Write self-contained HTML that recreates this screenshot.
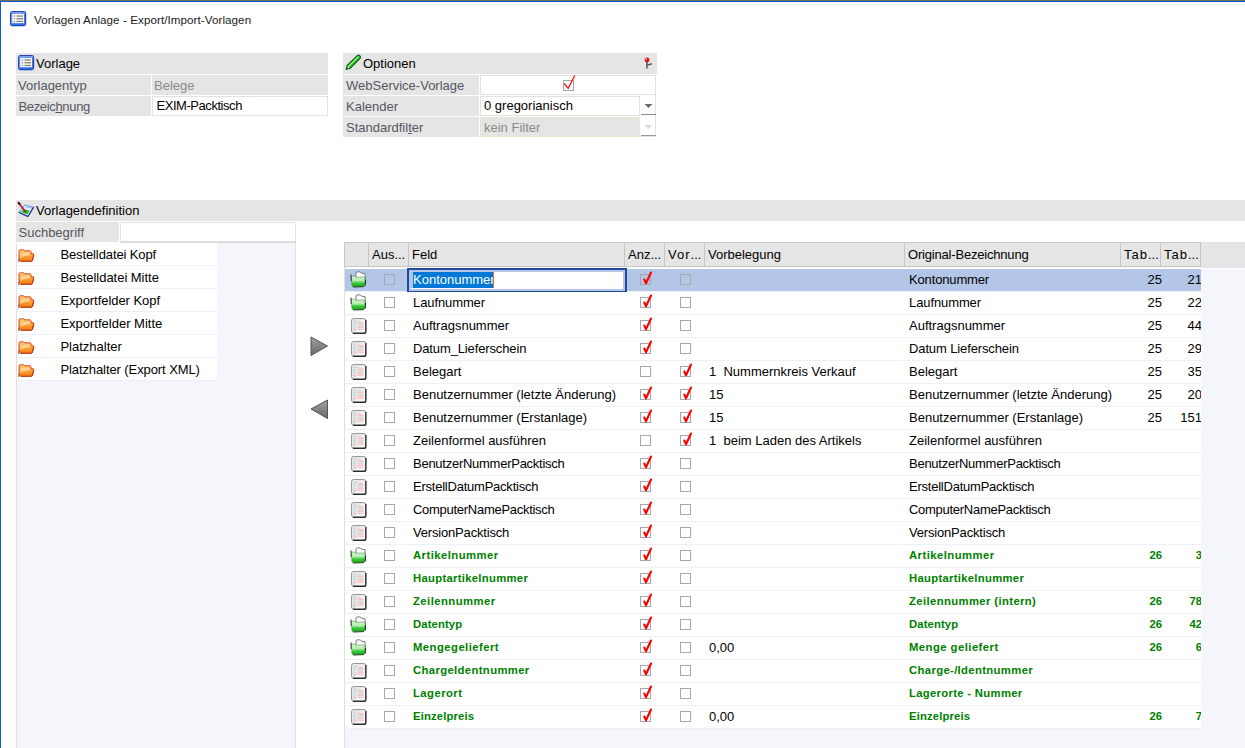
<!DOCTYPE html><html><head><meta charset="utf-8"><style>
html,body{margin:0;padding:0;}
body{width:1245px;height:748px;overflow:hidden;position:relative;background:#fff;font-family:"Liberation Sans",sans-serif;}
div{position:absolute;}
.t{white-space:nowrap;line-height:20px;height:20px;}
</style></head><body>
<div style="left:0px;top:0px;width:1245px;height:1px;background:#746a5e"></div>
<div style="left:0px;top:1px;width:1245px;height:1px;background:#0b5ccf"></div>
<div style="left:0px;top:1px;width:1px;height:747px;background:#0b5ccf"></div>
<svg style="position:absolute;left:10px;top:11px" width="17" height="16" viewBox="0 0 17 16">
<rect x="0.6" y="0.6" width="15" height="14" rx="1.8" fill="#fefefe" stroke="#2546b8" stroke-width="1.2"/>
<rect x="1.2" y="1.2" width="13.8" height="1.8" fill="#6d98ee"/>
<rect x="1.2" y="12.2" width="13.8" height="1.8" fill="#2f6ff2"/>
<rect x="1.2" y="3" width="1" height="9.2" fill="#4d7be0"/><rect x="14" y="3" width="1" height="9.2" fill="#4d7be0"/>
<rect x="3.6" y="4.4" width="1.6" height="1.3" fill="#8c8c8c"/><rect x="6.4" y="4.4" width="6.6" height="1.3" fill="#7f7f7f"/>
<rect x="3.6" y="7.1" width="1.6" height="1.3" fill="#8c8c8c"/><rect x="6.4" y="7.1" width="6.6" height="1.3" fill="#7f7f7f"/>
<rect x="3.6" y="9.8" width="1.6" height="1.3" fill="#8c8c8c"/><rect x="6.4" y="9.8" width="6.6" height="1.3" fill="#7f7f7f"/>
</svg>
<div class="t" style="left:34px;top:9.98px;font-size:11.6px;color:#1a1a1a;letter-spacing:0.08px;">Vorlagen Anlage - Export/Import-Vorlagen</div>
<div style="left:16px;top:53px;width:312px;height:21px;background:#e5e5e5"></div>
<svg style="position:absolute;left:18px;top:55px" width="17" height="16" viewBox="0 0 17 16">
<rect x="0.6" y="0.6" width="15" height="14" rx="1.8" fill="#fefefe" stroke="#2546b8" stroke-width="1.2"/>
<rect x="1.2" y="1.2" width="13.8" height="1.8" fill="#6d98ee"/>
<rect x="1.2" y="12.2" width="13.8" height="1.8" fill="#2f6ff2"/>
<rect x="1.2" y="3" width="1" height="9.2" fill="#4d7be0"/><rect x="14" y="3" width="1" height="9.2" fill="#4d7be0"/>
<rect x="3.6" y="4.4" width="1.6" height="1.3" fill="#8c8c8c"/><rect x="6.4" y="4.4" width="6.6" height="1.3" fill="#7f7f7f"/>
<rect x="3.6" y="7.1" width="1.6" height="1.3" fill="#8c8c8c"/><rect x="6.4" y="7.1" width="6.6" height="1.3" fill="#7f7f7f"/>
<rect x="3.6" y="9.8" width="1.6" height="1.3" fill="#8c8c8c"/><rect x="6.4" y="9.8" width="6.6" height="1.3" fill="#7f7f7f"/>
</svg>
<div class="t" style="left:36px;top:53.50px;font-size:13px;color:#000;">Vorlage</div>
<div style="left:16px;top:75px;width:135px;height:20px;background:#e5e5e5"></div>
<div style="left:152px;top:75px;width:176px;height:20px;background:#e5e5e5"></div>
<div class="t" style="left:154px;top:75.50px;font-size:13px;color:#8a8a8a;">Belege</div>
<div style="left:16px;top:96px;width:135px;height:20px;background:#e5e5e5"></div>
<div style="left:152px;top:96px;width:176px;height:20px;background:#fff;border:1px solid #e2e2e2;box-sizing:border-box"></div>
<div class="t" style="left:156.5px;top:95.50px;font-size:13px;color:#000;letter-spacing:-0.45px;">EXIM-Packtisch</div>
<div class="t" style="left:18px;top:75.50px;font-size:13px;color:#565662;">Vorlagentyp</div>
<div class="t" style="left:18.4px;top:96.50px;font-size:13px;color:#565662;letter-spacing:-0.33px;">Bezeic<u>h</u>nung</div>
<div style="left:343px;top:53px;width:314px;height:21px;background:#e5e5e5"></div>
<svg style="position:absolute;left:345px;top:54px" width="17" height="17" viewBox="0 0 17 17">
<path d="M1.2 15.3 L2.3 11.3 L12.3 1.6 Q13.7 0.6 14.9 1.8 Q16 3 15 4.3 L5.2 14.2 Z" fill="#2fc12f" stroke="#0a5a0a" stroke-width="1.1"/>
<path d="M3.3 12.6 L13.6 2.6" stroke="#b8f7a8" stroke-width="1.1"/>
<path d="M1.2 15.3 L1.9 12.6 L3.9 14.6 Z" fill="#0a4a0a"/>
<circle cx="3.2" cy="13.3" r="0.9" fill="#f0fff0"/>
</svg>
<div class="t" style="left:363px;top:53.50px;font-size:13px;color:#000;">Optionen</div>
<svg style="position:absolute;left:644px;top:57px" width="9" height="13" viewBox="0 0 9 13">
<path d="M3 5 L2.8 11.5" stroke="#5f6673" stroke-width="1.7"/>
<path d="M3 8.2 L7.8 6.8" stroke="#555b66" stroke-width="1.6"/>
<circle cx="3" cy="3" r="2.45" fill="#e3101a"/>
<circle cx="2.2" cy="2.1" r="0.9" fill="#ffa8a8"/>
</svg>
<div style="left:343px;top:74px;width:1px;height:63px;background:#e5e5e5"></div>
<div style="left:343px;top:75px;width:136px;height:20px;background:#e5e5e5"></div>
<div class="t" style="left:346px;top:75.50px;font-size:13px;color:#565662;">WebService-Vorlage</div>
<div style="left:343px;top:96px;width:136px;height:20px;background:#e5e5e5"></div>
<div class="t" style="left:346px;top:96.50px;font-size:13px;color:#565662;">Kalender</div>
<div style="left:343px;top:117px;width:136px;height:20px;background:#e5e5e5"></div>
<div class="t" style="left:346px;top:117.50px;font-size:13px;color:#565662;">Standardfil<u>t</u>er</div>
<div style="left:480px;top:75px;width:176px;height:20px;background:#fff;border:1px solid #e2e2e2;box-sizing:border-box"></div>
<div style="left:563px;top:80px;width:11px;height:11px;border:1px solid #a8a8a8;box-sizing:border-box;"></div>
<svg style="position:absolute;left:563px;top:75px" width="13" height="16" viewBox="0 0 13 16"><path d="M1.3 8.5 L5.2 13.3 L11.8 0.5" stroke="#ff1010" stroke-width="1.3" fill="none"/></svg>
<div style="left:480px;top:95px;width:176px;height:22px;background:#fff;border-right:1px solid #e2e2e2;box-sizing:border-box"></div>
<div style="left:480px;top:96px;width:160px;height:20px;background:#fff;border:1px solid #e2e2e2;box-sizing:border-box"></div>
<div class="t" style="left:484px;top:95.50px;font-size:13px;color:#000;">0 gregorianisch</div>
<svg style="position:absolute;left:644px;top:104px" width="9" height="5" viewBox="0 0 9 5"><path d="M0.5 0 L8.5 0 L4.5 4 Z" fill="#6a6a6a"/></svg>
<div style="left:641px;top:114px;width:15px;height:1px;background:#8a8a8a"></div>
<div style="left:480px;top:116px;width:176px;height:21px;background:#fff;border-right:1px solid #e2e2e2;border-bottom:1px solid #e2e2e2;box-sizing:border-box"></div>
<div style="left:480px;top:117px;width:160px;height:20px;background:#e5e5e5;border:1px solid #ece5d0;box-sizing:border-box"></div>
<div class="t" style="left:484px;top:117.50px;font-size:13px;color:#8a8a8a;">kein Filter</div>
<svg style="position:absolute;left:644px;top:125px" width="9" height="5" viewBox="0 0 9 5"><path d="M0.5 0 L8.5 0 L4.5 4 Z" fill="#dcdcdc"/></svg>
<div style="left:641px;top:135px;width:15px;height:1px;background:#9a9a9a"></div>
<div style="left:16px;top:200px;width:1229px;height:21px;background:#e5e5e5"></div>
<svg style="position:absolute;left:17px;top:201px" width="18" height="17" viewBox="0 0 18 17">
<path d="M2 11.4 L7.9 4 L16.7 6.1 L10.8 15.5 Z" fill="#eef3ff" stroke="#7d9de6" stroke-width="1.1"/>
<path d="M16.7 6.1 L10.8 15.5 L2 11.4" fill="none" stroke="#1f3f8f" stroke-width="1.3"/>
<path d="M8.6 5.8 L14.8 7.2" stroke="#9fb8f0" stroke-width="1.3"/>
<path d="M4 11 L6.6 8 L12.6 9.6 L10.2 13.6 Z" fill="#1fc21f"/>
<path d="M1.2 1.2 L8.8 11.2" stroke="#b51c1c" stroke-width="1.6"/>
<path d="M1.2 1.2 L3 3.6" stroke="#3a0606" stroke-width="1.8"/>
</svg>
<div class="t" style="left:36px;top:200.50px;font-size:13px;color:#000;">Vorlagendefinition</div>
<div style="left:16px;top:222px;width:103px;height:20px;background:#e5e5e5"></div>
<div class="t" style="left:18.5px;top:222.50px;font-size:13px;color:#565662;">Suchbegriff</div>
<div style="left:120px;top:222px;width:176px;height:21px;background:#fff;border:1px solid #e2e2e2;border-bottom:2px solid #dcdcdc;box-sizing:border-box"></div>
<div style="left:16px;top:243px;width:280px;height:505px;background:#f4f6fb;border-left:1px solid #e0e0e0;border-right:1px solid #e0e0e0;box-sizing:border-box"></div>
<div style="left:17px;top:243px;width:200px;height:23px;background:#fff;border-bottom:1px solid #eef0f7;box-sizing:border-box"></div>
<svg style="position:absolute;left:18px;top:249px" width="17" height="14" viewBox="0 0 17 14">
<defs><linearGradient id="of" x1="0" y1="0" x2="0" y2="1"><stop offset="0" stop-color="#ffd08a"/><stop offset="0.45" stop-color="#ffa43a"/><stop offset="1" stop-color="#f27a12"/></linearGradient></defs>
<path d="M1 2 Q1 0.8 2.2 0.8 L5.5 0.8 L6.8 1.8 L12 1.8 Q13 1.8 13 3 L13 4.5 L15.3 4.8 Q16 5 15.8 6 L14.6 11.2 Q14.3 12.2 13.2 12.2 L2.3 12.2 Q1.2 12.2 1.1 11 Z" fill="url(#of)" stroke="#dc4a22" stroke-width="1"/>
<path d="M2.2 4.5 Q7 3.6 12 3.6 L12 6.2 Q6 6.8 2.4 9 Z" fill="#fff0d0" opacity="0.55"/>
<path d="M0.6 13.3 L0.7 9.5" stroke="#666" stroke-width="0.8"/><path d="M15.6 5.5 L14.4 11.4 Q14 12.3 12.8 12.3 L3 12.4" stroke="#a02a10" stroke-width="0.9" fill="none" opacity="0.8"/>
</svg>
<div class="t" style="left:60.4px;top:244.50px;font-size:13px;color:#000;letter-spacing:-0.11px;">Bestelldatei Kopf</div>
<div style="left:17px;top:266px;width:200px;height:23px;background:#fff;border-bottom:1px solid #eef0f7;box-sizing:border-box"></div>
<svg style="position:absolute;left:18px;top:272px" width="17" height="14" viewBox="0 0 17 14">
<defs><linearGradient id="of" x1="0" y1="0" x2="0" y2="1"><stop offset="0" stop-color="#ffd08a"/><stop offset="0.45" stop-color="#ffa43a"/><stop offset="1" stop-color="#f27a12"/></linearGradient></defs>
<path d="M1 2 Q1 0.8 2.2 0.8 L5.5 0.8 L6.8 1.8 L12 1.8 Q13 1.8 13 3 L13 4.5 L15.3 4.8 Q16 5 15.8 6 L14.6 11.2 Q14.3 12.2 13.2 12.2 L2.3 12.2 Q1.2 12.2 1.1 11 Z" fill="url(#of)" stroke="#dc4a22" stroke-width="1"/>
<path d="M2.2 4.5 Q7 3.6 12 3.6 L12 6.2 Q6 6.8 2.4 9 Z" fill="#fff0d0" opacity="0.55"/>
<path d="M0.6 13.3 L0.7 9.5" stroke="#666" stroke-width="0.8"/><path d="M15.6 5.5 L14.4 11.4 Q14 12.3 12.8 12.3 L3 12.4" stroke="#a02a10" stroke-width="0.9" fill="none" opacity="0.8"/>
</svg>
<div class="t" style="left:60.4px;top:267.50px;font-size:13px;color:#000;letter-spacing:-0.03px;">Bestelldatei Mitte</div>
<div style="left:17px;top:289px;width:200px;height:23px;background:#fff;border-bottom:1px solid #eef0f7;box-sizing:border-box"></div>
<svg style="position:absolute;left:18px;top:295px" width="17" height="14" viewBox="0 0 17 14">
<defs><linearGradient id="of" x1="0" y1="0" x2="0" y2="1"><stop offset="0" stop-color="#ffd08a"/><stop offset="0.45" stop-color="#ffa43a"/><stop offset="1" stop-color="#f27a12"/></linearGradient></defs>
<path d="M1 2 Q1 0.8 2.2 0.8 L5.5 0.8 L6.8 1.8 L12 1.8 Q13 1.8 13 3 L13 4.5 L15.3 4.8 Q16 5 15.8 6 L14.6 11.2 Q14.3 12.2 13.2 12.2 L2.3 12.2 Q1.2 12.2 1.1 11 Z" fill="url(#of)" stroke="#dc4a22" stroke-width="1"/>
<path d="M2.2 4.5 Q7 3.6 12 3.6 L12 6.2 Q6 6.8 2.4 9 Z" fill="#fff0d0" opacity="0.55"/>
<path d="M0.6 13.3 L0.7 9.5" stroke="#666" stroke-width="0.8"/><path d="M15.6 5.5 L14.4 11.4 Q14 12.3 12.8 12.3 L3 12.4" stroke="#a02a10" stroke-width="0.9" fill="none" opacity="0.8"/>
</svg>
<div class="t" style="left:60.4px;top:290.50px;font-size:13px;color:#000;letter-spacing:-0.05px;">Exportfelder Kopf</div>
<div style="left:17px;top:312px;width:200px;height:23px;background:#fff;border-bottom:1px solid #eef0f7;box-sizing:border-box"></div>
<svg style="position:absolute;left:18px;top:318px" width="17" height="14" viewBox="0 0 17 14">
<defs><linearGradient id="of" x1="0" y1="0" x2="0" y2="1"><stop offset="0" stop-color="#ffd08a"/><stop offset="0.45" stop-color="#ffa43a"/><stop offset="1" stop-color="#f27a12"/></linearGradient></defs>
<path d="M1 2 Q1 0.8 2.2 0.8 L5.5 0.8 L6.8 1.8 L12 1.8 Q13 1.8 13 3 L13 4.5 L15.3 4.8 Q16 5 15.8 6 L14.6 11.2 Q14.3 12.2 13.2 12.2 L2.3 12.2 Q1.2 12.2 1.1 11 Z" fill="url(#of)" stroke="#dc4a22" stroke-width="1"/>
<path d="M2.2 4.5 Q7 3.6 12 3.6 L12 6.2 Q6 6.8 2.4 9 Z" fill="#fff0d0" opacity="0.55"/>
<path d="M0.6 13.3 L0.7 9.5" stroke="#666" stroke-width="0.8"/><path d="M15.6 5.5 L14.4 11.4 Q14 12.3 12.8 12.3 L3 12.4" stroke="#a02a10" stroke-width="0.9" fill="none" opacity="0.8"/>
</svg>
<div class="t" style="left:60.4px;top:313.50px;font-size:13px;color:#000;letter-spacing:0px;">Exportfelder Mitte</div>
<div style="left:17px;top:335px;width:200px;height:23px;background:#fff;border-bottom:1px solid #eef0f7;box-sizing:border-box"></div>
<svg style="position:absolute;left:18px;top:341px" width="17" height="14" viewBox="0 0 17 14">
<defs><linearGradient id="of" x1="0" y1="0" x2="0" y2="1"><stop offset="0" stop-color="#ffd08a"/><stop offset="0.45" stop-color="#ffa43a"/><stop offset="1" stop-color="#f27a12"/></linearGradient></defs>
<path d="M1 2 Q1 0.8 2.2 0.8 L5.5 0.8 L6.8 1.8 L12 1.8 Q13 1.8 13 3 L13 4.5 L15.3 4.8 Q16 5 15.8 6 L14.6 11.2 Q14.3 12.2 13.2 12.2 L2.3 12.2 Q1.2 12.2 1.1 11 Z" fill="url(#of)" stroke="#dc4a22" stroke-width="1"/>
<path d="M2.2 4.5 Q7 3.6 12 3.6 L12 6.2 Q6 6.8 2.4 9 Z" fill="#fff0d0" opacity="0.55"/>
<path d="M0.6 13.3 L0.7 9.5" stroke="#666" stroke-width="0.8"/><path d="M15.6 5.5 L14.4 11.4 Q14 12.3 12.8 12.3 L3 12.4" stroke="#a02a10" stroke-width="0.9" fill="none" opacity="0.8"/>
</svg>
<div class="t" style="left:60.4px;top:336.50px;font-size:13px;color:#000;letter-spacing:0px;">Platzhalter</div>
<div style="left:17px;top:358px;width:200px;height:23px;background:#fff;border-bottom:1px solid #eef0f7;box-sizing:border-box"></div>
<svg style="position:absolute;left:18px;top:364px" width="17" height="14" viewBox="0 0 17 14">
<defs><linearGradient id="of" x1="0" y1="0" x2="0" y2="1"><stop offset="0" stop-color="#ffd08a"/><stop offset="0.45" stop-color="#ffa43a"/><stop offset="1" stop-color="#f27a12"/></linearGradient></defs>
<path d="M1 2 Q1 0.8 2.2 0.8 L5.5 0.8 L6.8 1.8 L12 1.8 Q13 1.8 13 3 L13 4.5 L15.3 4.8 Q16 5 15.8 6 L14.6 11.2 Q14.3 12.2 13.2 12.2 L2.3 12.2 Q1.2 12.2 1.1 11 Z" fill="url(#of)" stroke="#dc4a22" stroke-width="1"/>
<path d="M2.2 4.5 Q7 3.6 12 3.6 L12 6.2 Q6 6.8 2.4 9 Z" fill="#fff0d0" opacity="0.55"/>
<path d="M0.6 13.3 L0.7 9.5" stroke="#666" stroke-width="0.8"/><path d="M15.6 5.5 L14.4 11.4 Q14 12.3 12.8 12.3 L3 12.4" stroke="#a02a10" stroke-width="0.9" fill="none" opacity="0.8"/>
</svg>
<div class="t" style="left:60.4px;top:359.50px;font-size:13px;color:#000;letter-spacing:-0.09px;">Platzhalter (Export XML)</div>
<svg style="position:absolute;left:310px;top:336px" width="19" height="21" viewBox="0 0 19 21"><defs><linearGradient id="g310336" x1="0" y1="0" x2="0" y2="1"><stop offset="0" stop-color="#a0a0a0"/><stop offset="1" stop-color="#6a6a6a"/></linearGradient></defs>
<path d="M1 1 L17.5 10 L1 19.5 Z" fill="url(#g310336)" stroke="#555" stroke-width="1" stroke-linejoin="round"/></svg>
<svg style="position:absolute;left:310px;top:399px" width="19" height="21" viewBox="0 0 19 21"><defs><linearGradient id="g310399" x1="0" y1="0" x2="0" y2="1"><stop offset="0" stop-color="#a0a0a0"/><stop offset="1" stop-color="#6a6a6a"/></linearGradient></defs>
<path d="M17.5 1 L1 10 L17.5 19.5 Z" fill="url(#g310399)" stroke="#555" stroke-width="1" stroke-linejoin="round"/></svg>
<div style="left:344px;top:242px;width:901px;height:506px;background:#f4f6fb"></div>
<div style="left:344px;top:242px;width:1px;height:506px;background:#e0e0e0"></div>
<div style="left:345px;top:267px;width:900px;height:2px;background:#fff"></div>
<div style="left:1201px;top:242px;width:44px;height:26px;background:#e5e5e5"></div>
<div style="left:344px;top:242px;width:857px;height:25px;background:#e5e5e5;border:1px solid #c6c6c6;box-sizing:border-box"></div>
<div style="left:368px;top:242px;width:1px;height:25px;background:#c6c6c6"></div>
<div style="left:408px;top:242px;width:1px;height:25px;background:#c6c6c6"></div>
<div style="left:624px;top:242px;width:1px;height:25px;background:#c6c6c6"></div>
<div style="left:664px;top:242px;width:1px;height:25px;background:#c6c6c6"></div>
<div style="left:704px;top:242px;width:1px;height:25px;background:#c6c6c6"></div>
<div style="left:904px;top:242px;width:1px;height:25px;background:#c6c6c6"></div>
<div style="left:1120px;top:242px;width:1px;height:25px;background:#c6c6c6"></div>
<div style="left:1160px;top:242px;width:1px;height:25px;background:#c6c6c6"></div>
<div class="t" style="left:372px;top:244.50px;font-size:13px;color:#000;letter-spacing:0px;">Aus...</div>
<div class="t" style="left:412px;top:244.50px;font-size:13px;color:#000;letter-spacing:0px;">Feld</div>
<div class="t" style="left:628px;top:244.50px;font-size:13px;color:#000;letter-spacing:0px;">Anz...</div>
<div class="t" style="left:668px;top:244.50px;font-size:13px;color:#000;letter-spacing:0px;"><span style="letter-spacing:1px">Vor</span>...</div>
<div class="t" style="left:708px;top:244.50px;font-size:13px;color:#000;letter-spacing:0px;">Vorbelegung</div>
<div class="t" style="left:908px;top:244.50px;font-size:13px;color:#000;letter-spacing:-0.19px;">Original-Bezeichnung</div>
<div class="t" style="left:1124px;top:244.50px;font-size:13px;color:#000;letter-spacing:0px;"><span style="letter-spacing:1px">Tab</span>...</div>
<div class="t" style="left:1164px;top:244.50px;font-size:13px;color:#000;letter-spacing:0px;"><span style="letter-spacing:1px">Tab</span>...</div>
<div style="left:345px;top:269px;width:856px;height:23px;background:#b3c6e7"></div>
<div style="left:345px;top:291px;width:856px;height:1px;background:#eef0f7"></div>
<svg style="position:absolute;left:350px;top:271px" width="17" height="17" viewBox="0 0 17 17">
<defs><linearGradient id="gf" x1="0" y1="0" x2="0" y2="1"><stop offset="0" stop-color="#dcf6d4"/><stop offset="0.45" stop-color="#b2ecaa"/><stop offset="0.62" stop-color="#3fd03f"/><stop offset="1" stop-color="#16a316"/></linearGradient></defs>
<path d="M6 2 Q6.2 0.9 7.3 0.9 L10 0.9 L11.6 2.2 L15 2.6 L15.6 10 L6 10 Z" fill="#fafafa" stroke="#6f6f6f" stroke-width="0.9"/>
<path d="M1.3 5.2 L4.6 5 L5.6 6.2 L14.6 6 L15.2 13.2 Q15 15.5 13 15.5 L3.6 15.8 Q1.9 15.8 1.8 14 Z" fill="url(#gf)" stroke="#3f8a3f" stroke-width="0.5"/>
<path d="M1 3.5 L1.2 10" stroke="#333" stroke-width="1"/>
<path d="M15.6 9 L15.2 14.6" stroke="#1f2f1f" stroke-width="1"/>
<path d="M3.2 16 L14 15.6" stroke="#2a3a2a" stroke-width="0.9"/>
</svg>
<div style="left:384px;top:274px;width:11px;height:11px;border:1px solid #9fa9b8;box-sizing:border-box;background:transparent;"></div>
<div style="left:640px;top:274px;width:11px;height:11px;border:1px solid #a8a8a8;box-sizing:border-box;"></div>
<svg style="position:absolute;left:640px;top:271px" width="13" height="15" viewBox="0 0 13 15"><path d="M4.3 8.5 L6 12.3 L11 1.5" stroke="#ff0000" stroke-width="2.1" fill="none" stroke-linecap="round" stroke-linejoin="round"/></svg>
<div style="left:680px;top:274px;width:11px;height:11px;border:1px solid #a8a8a8;box-sizing:border-box;"></div>
<div style="left:407px;top:268px;width:220px;height:25px;background:#fff;border:2px solid #1f4b99;box-sizing:border-box;box-shadow:inset 0 0 0 2px #b3c6e7"></div>
<div style="left:411px;top:272px;width:2px;height:16px;background:#b3c6e7"></div>
<div style="left:413px;top:272px;width:81px;height:16px;background:#0078d7"></div>
<div class="t" style="left:413px;top:269.50px;font-size:13px;color:#fff;">Kontonummer</div>
<div style="left:493px;top:272px;width:1px;height:16px;background:#e07a10"></div>
<div class="t" style="left:909px;top:269.50px;font-size:13px;color:#000;letter-spacing:-0.15px;">Kontonummer</div>
<div class="t" style="right:83px;top:269.50px;font-size:13px;color:#000;text-align:right">25</div>
<div style="left:1160px;top:269px;width:41px;height:22px;overflow:hidden">
<div class="t" style="right:-1px;top:0.50px;font-size:13px;color:#000;">21</div></div>
<div style="left:345px;top:292px;width:856px;height:23px;background:#fff;border-bottom:1px solid #eef0f7;box-sizing:border-box"></div>
<svg style="position:absolute;left:350px;top:294px" width="17" height="17" viewBox="0 0 17 17">
<defs><linearGradient id="gf" x1="0" y1="0" x2="0" y2="1"><stop offset="0" stop-color="#dcf6d4"/><stop offset="0.45" stop-color="#b2ecaa"/><stop offset="0.62" stop-color="#3fd03f"/><stop offset="1" stop-color="#16a316"/></linearGradient></defs>
<path d="M6 2 Q6.2 0.9 7.3 0.9 L10 0.9 L11.6 2.2 L15 2.6 L15.6 10 L6 10 Z" fill="#fafafa" stroke="#6f6f6f" stroke-width="0.9"/>
<path d="M1.3 5.2 L4.6 5 L5.6 6.2 L14.6 6 L15.2 13.2 Q15 15.5 13 15.5 L3.6 15.8 Q1.9 15.8 1.8 14 Z" fill="url(#gf)" stroke="#3f8a3f" stroke-width="0.5"/>
<path d="M1 3.5 L1.2 10" stroke="#333" stroke-width="1"/>
<path d="M15.6 9 L15.2 14.6" stroke="#1f2f1f" stroke-width="1"/>
<path d="M3.2 16 L14 15.6" stroke="#2a3a2a" stroke-width="0.9"/>
</svg>
<div style="left:384px;top:297px;width:11px;height:11px;border:1px solid #a8a8a8;box-sizing:border-box;"></div>
<div style="left:640px;top:297px;width:11px;height:11px;border:1px solid #a8a8a8;box-sizing:border-box;"></div>
<svg style="position:absolute;left:640px;top:294px" width="13" height="15" viewBox="0 0 13 15"><path d="M4.3 8.5 L6 12.3 L11 1.5" stroke="#ff0000" stroke-width="2.1" fill="none" stroke-linecap="round" stroke-linejoin="round"/></svg>
<div style="left:680px;top:297px;width:11px;height:11px;border:1px solid #a8a8a8;box-sizing:border-box;"></div>
<div class="t" style="left:413px;top:292.50px;font-size:13px;color:#000;letter-spacing:-0.1px;">Laufnummer</div>
<div class="t" style="left:909px;top:292.50px;font-size:13px;color:#000;letter-spacing:-0.1px;">Laufnummer</div>
<div class="t" style="right:83px;top:292.50px;font-size:13px;color:#000;text-align:right">25</div>
<div style="left:1160px;top:292px;width:41px;height:22px;overflow:hidden">
<div class="t" style="right:-1px;top:0.50px;font-size:13px;color:#000;">22</div></div>
<div style="left:345px;top:315px;width:856px;height:23px;background:#fff;border-bottom:1px solid #eef0f7;box-sizing:border-box"></div>
<svg style="position:absolute;left:351px;top:318px" width="17" height="17" viewBox="0 0 17 17">
<rect x="0.6" y="0.6" width="14" height="14.4" rx="1.8" fill="#f2f2f2" stroke="#808080" stroke-width="0.9"/>
<path d="M14.9 2 L14.9 13.4 Q14.9 15.4 12.9 15.4 L2 15.4" stroke="#2a2a2a" stroke-width="1.3" fill="none"/>
<rect x="2.2" y="2.6" width="4" height="1.1" fill="#c4c4c4"/><rect x="7" y="2.6" width="3" height="1.1" fill="#cfd8dc"/>
<rect x="2.2" y="4.6" width="3" height="1.1" fill="#b9ccf6"/><rect x="6.3" y="4.6" width="6" height="1.1" fill="#f6a8a8"/>
<rect x="2.2" y="6.6" width="3" height="1.1" fill="#a9d8b0"/><rect x="6.3" y="6.6" width="6" height="1.1" fill="#d0d0d0"/>
<rect x="2.2" y="8.6" width="3" height="1.1" fill="#b9ccf6"/><rect x="6.3" y="8.6" width="6" height="1.1" fill="#f6b0b0"/>
<rect x="2.2" y="10.6" width="3" height="1.1" fill="#f0a8a8"/><rect x="6.3" y="10.6" width="6" height="1.1" fill="#f6b8b8"/>
<rect x="2.2" y="12.4" width="2.5" height="0.9" fill="#b0dcb0"/>
</svg>
<div style="left:384px;top:320px;width:11px;height:11px;border:1px solid #a8a8a8;box-sizing:border-box;"></div>
<div style="left:640px;top:320px;width:11px;height:11px;border:1px solid #a8a8a8;box-sizing:border-box;"></div>
<svg style="position:absolute;left:640px;top:317px" width="13" height="15" viewBox="0 0 13 15"><path d="M4.3 8.5 L6 12.3 L11 1.5" stroke="#ff0000" stroke-width="2.1" fill="none" stroke-linecap="round" stroke-linejoin="round"/></svg>
<div style="left:680px;top:320px;width:11px;height:11px;border:1px solid #a8a8a8;box-sizing:border-box;"></div>
<div class="t" style="left:413px;top:315.50px;font-size:13px;color:#000;letter-spacing:0px;">Auftragsnummer</div>
<div class="t" style="left:909px;top:315.50px;font-size:13px;color:#000;letter-spacing:0px;">Auftragsnummer</div>
<div class="t" style="right:83px;top:315.50px;font-size:13px;color:#000;text-align:right">25</div>
<div style="left:1160px;top:315px;width:41px;height:22px;overflow:hidden">
<div class="t" style="right:-1px;top:0.50px;font-size:13px;color:#000;">44</div></div>
<div style="left:345px;top:338px;width:856px;height:23px;background:#fff;border-bottom:1px solid #eef0f7;box-sizing:border-box"></div>
<svg style="position:absolute;left:351px;top:341px" width="17" height="17" viewBox="0 0 17 17">
<rect x="0.6" y="0.6" width="14" height="14.4" rx="1.8" fill="#f2f2f2" stroke="#808080" stroke-width="0.9"/>
<path d="M14.9 2 L14.9 13.4 Q14.9 15.4 12.9 15.4 L2 15.4" stroke="#2a2a2a" stroke-width="1.3" fill="none"/>
<rect x="2.2" y="2.6" width="4" height="1.1" fill="#c4c4c4"/><rect x="7" y="2.6" width="3" height="1.1" fill="#cfd8dc"/>
<rect x="2.2" y="4.6" width="3" height="1.1" fill="#b9ccf6"/><rect x="6.3" y="4.6" width="6" height="1.1" fill="#f6a8a8"/>
<rect x="2.2" y="6.6" width="3" height="1.1" fill="#a9d8b0"/><rect x="6.3" y="6.6" width="6" height="1.1" fill="#d0d0d0"/>
<rect x="2.2" y="8.6" width="3" height="1.1" fill="#b9ccf6"/><rect x="6.3" y="8.6" width="6" height="1.1" fill="#f6b0b0"/>
<rect x="2.2" y="10.6" width="3" height="1.1" fill="#f0a8a8"/><rect x="6.3" y="10.6" width="6" height="1.1" fill="#f6b8b8"/>
<rect x="2.2" y="12.4" width="2.5" height="0.9" fill="#b0dcb0"/>
</svg>
<div style="left:384px;top:343px;width:11px;height:11px;border:1px solid #a8a8a8;box-sizing:border-box;"></div>
<div style="left:640px;top:343px;width:11px;height:11px;border:1px solid #a8a8a8;box-sizing:border-box;"></div>
<svg style="position:absolute;left:640px;top:340px" width="13" height="15" viewBox="0 0 13 15"><path d="M4.3 8.5 L6 12.3 L11 1.5" stroke="#ff0000" stroke-width="2.1" fill="none" stroke-linecap="round" stroke-linejoin="round"/></svg>
<div style="left:680px;top:343px;width:11px;height:11px;border:1px solid #a8a8a8;box-sizing:border-box;"></div>
<div class="t" style="left:413px;top:338.50px;font-size:13px;color:#000;letter-spacing:-0.13px;">Datum_Lieferschein</div>
<div class="t" style="left:909px;top:338.50px;font-size:13px;color:#000;letter-spacing:-0.12px;">Datum Lieferschein</div>
<div class="t" style="right:83px;top:338.50px;font-size:13px;color:#000;text-align:right">25</div>
<div style="left:1160px;top:338px;width:41px;height:22px;overflow:hidden">
<div class="t" style="right:-1px;top:0.50px;font-size:13px;color:#000;">29</div></div>
<div style="left:345px;top:361px;width:856px;height:23px;background:#fff;border-bottom:1px solid #eef0f7;box-sizing:border-box"></div>
<svg style="position:absolute;left:351px;top:364px" width="17" height="17" viewBox="0 0 17 17">
<rect x="0.6" y="0.6" width="14" height="14.4" rx="1.8" fill="#f2f2f2" stroke="#808080" stroke-width="0.9"/>
<path d="M14.9 2 L14.9 13.4 Q14.9 15.4 12.9 15.4 L2 15.4" stroke="#2a2a2a" stroke-width="1.3" fill="none"/>
<rect x="2.2" y="2.6" width="4" height="1.1" fill="#c4c4c4"/><rect x="7" y="2.6" width="3" height="1.1" fill="#cfd8dc"/>
<rect x="2.2" y="4.6" width="3" height="1.1" fill="#b9ccf6"/><rect x="6.3" y="4.6" width="6" height="1.1" fill="#f6a8a8"/>
<rect x="2.2" y="6.6" width="3" height="1.1" fill="#a9d8b0"/><rect x="6.3" y="6.6" width="6" height="1.1" fill="#d0d0d0"/>
<rect x="2.2" y="8.6" width="3" height="1.1" fill="#b9ccf6"/><rect x="6.3" y="8.6" width="6" height="1.1" fill="#f6b0b0"/>
<rect x="2.2" y="10.6" width="3" height="1.1" fill="#f0a8a8"/><rect x="6.3" y="10.6" width="6" height="1.1" fill="#f6b8b8"/>
<rect x="2.2" y="12.4" width="2.5" height="0.9" fill="#b0dcb0"/>
</svg>
<div style="left:384px;top:366px;width:11px;height:11px;border:1px solid #a8a8a8;box-sizing:border-box;"></div>
<div style="left:640px;top:366px;width:11px;height:11px;border:1px solid #a8a8a8;box-sizing:border-box;"></div>
<div style="left:680px;top:366px;width:11px;height:11px;border:1px solid #a8a8a8;box-sizing:border-box;"></div>
<svg style="position:absolute;left:680px;top:363px" width="13" height="15" viewBox="0 0 13 15"><path d="M4.3 8.5 L6 12.3 L11 1.5" stroke="#ff0000" stroke-width="2.1" fill="none" stroke-linecap="round" stroke-linejoin="round"/></svg>
<div class="t" style="left:413px;top:361.50px;font-size:13px;color:#000;letter-spacing:0px;">Belegart</div>
<div class="t" style="left:709px;top:361.50px;font-size:13px;color:#000;">1&nbsp;&nbsp;Nummernkreis Verkauf</div>
<div class="t" style="left:909px;top:361.50px;font-size:13px;color:#000;letter-spacing:0px;">Belegart</div>
<div class="t" style="right:83px;top:361.50px;font-size:13px;color:#000;text-align:right">25</div>
<div style="left:1160px;top:361px;width:41px;height:22px;overflow:hidden">
<div class="t" style="right:-1px;top:0.50px;font-size:13px;color:#000;">35</div></div>
<div style="left:345px;top:384px;width:856px;height:23px;background:#fff;border-bottom:1px solid #eef0f7;box-sizing:border-box"></div>
<svg style="position:absolute;left:351px;top:387px" width="17" height="17" viewBox="0 0 17 17">
<rect x="0.6" y="0.6" width="14" height="14.4" rx="1.8" fill="#f2f2f2" stroke="#808080" stroke-width="0.9"/>
<path d="M14.9 2 L14.9 13.4 Q14.9 15.4 12.9 15.4 L2 15.4" stroke="#2a2a2a" stroke-width="1.3" fill="none"/>
<rect x="2.2" y="2.6" width="4" height="1.1" fill="#c4c4c4"/><rect x="7" y="2.6" width="3" height="1.1" fill="#cfd8dc"/>
<rect x="2.2" y="4.6" width="3" height="1.1" fill="#b9ccf6"/><rect x="6.3" y="4.6" width="6" height="1.1" fill="#f6a8a8"/>
<rect x="2.2" y="6.6" width="3" height="1.1" fill="#a9d8b0"/><rect x="6.3" y="6.6" width="6" height="1.1" fill="#d0d0d0"/>
<rect x="2.2" y="8.6" width="3" height="1.1" fill="#b9ccf6"/><rect x="6.3" y="8.6" width="6" height="1.1" fill="#f6b0b0"/>
<rect x="2.2" y="10.6" width="3" height="1.1" fill="#f0a8a8"/><rect x="6.3" y="10.6" width="6" height="1.1" fill="#f6b8b8"/>
<rect x="2.2" y="12.4" width="2.5" height="0.9" fill="#b0dcb0"/>
</svg>
<div style="left:384px;top:389px;width:11px;height:11px;border:1px solid #a8a8a8;box-sizing:border-box;"></div>
<div style="left:640px;top:389px;width:11px;height:11px;border:1px solid #a8a8a8;box-sizing:border-box;"></div>
<svg style="position:absolute;left:640px;top:386px" width="13" height="15" viewBox="0 0 13 15"><path d="M4.3 8.5 L6 12.3 L11 1.5" stroke="#ff0000" stroke-width="2.1" fill="none" stroke-linecap="round" stroke-linejoin="round"/></svg>
<div style="left:680px;top:389px;width:11px;height:11px;border:1px solid #a8a8a8;box-sizing:border-box;"></div>
<svg style="position:absolute;left:680px;top:386px" width="13" height="15" viewBox="0 0 13 15"><path d="M4.3 8.5 L6 12.3 L11 1.5" stroke="#ff0000" stroke-width="2.1" fill="none" stroke-linecap="round" stroke-linejoin="round"/></svg>
<div class="t" style="left:413px;top:384.50px;font-size:13px;color:#000;letter-spacing:0px;">Benutzernummer (letzte Änderung)</div>
<div class="t" style="left:709px;top:384.50px;font-size:13px;color:#000;">15</div>
<div class="t" style="left:909px;top:384.50px;font-size:13px;color:#000;letter-spacing:0px;">Benutzernummer (letzte Änderung)</div>
<div class="t" style="right:83px;top:384.50px;font-size:13px;color:#000;text-align:right">25</div>
<div style="left:1160px;top:384px;width:41px;height:22px;overflow:hidden">
<div class="t" style="right:-1px;top:0.50px;font-size:13px;color:#000;">20</div></div>
<div style="left:345px;top:407px;width:856px;height:23px;background:#fff;border-bottom:1px solid #eef0f7;box-sizing:border-box"></div>
<svg style="position:absolute;left:351px;top:410px" width="17" height="17" viewBox="0 0 17 17">
<rect x="0.6" y="0.6" width="14" height="14.4" rx="1.8" fill="#f2f2f2" stroke="#808080" stroke-width="0.9"/>
<path d="M14.9 2 L14.9 13.4 Q14.9 15.4 12.9 15.4 L2 15.4" stroke="#2a2a2a" stroke-width="1.3" fill="none"/>
<rect x="2.2" y="2.6" width="4" height="1.1" fill="#c4c4c4"/><rect x="7" y="2.6" width="3" height="1.1" fill="#cfd8dc"/>
<rect x="2.2" y="4.6" width="3" height="1.1" fill="#b9ccf6"/><rect x="6.3" y="4.6" width="6" height="1.1" fill="#f6a8a8"/>
<rect x="2.2" y="6.6" width="3" height="1.1" fill="#a9d8b0"/><rect x="6.3" y="6.6" width="6" height="1.1" fill="#d0d0d0"/>
<rect x="2.2" y="8.6" width="3" height="1.1" fill="#b9ccf6"/><rect x="6.3" y="8.6" width="6" height="1.1" fill="#f6b0b0"/>
<rect x="2.2" y="10.6" width="3" height="1.1" fill="#f0a8a8"/><rect x="6.3" y="10.6" width="6" height="1.1" fill="#f6b8b8"/>
<rect x="2.2" y="12.4" width="2.5" height="0.9" fill="#b0dcb0"/>
</svg>
<div style="left:384px;top:412px;width:11px;height:11px;border:1px solid #a8a8a8;box-sizing:border-box;"></div>
<div style="left:640px;top:412px;width:11px;height:11px;border:1px solid #a8a8a8;box-sizing:border-box;"></div>
<svg style="position:absolute;left:640px;top:409px" width="13" height="15" viewBox="0 0 13 15"><path d="M4.3 8.5 L6 12.3 L11 1.5" stroke="#ff0000" stroke-width="2.1" fill="none" stroke-linecap="round" stroke-linejoin="round"/></svg>
<div style="left:680px;top:412px;width:11px;height:11px;border:1px solid #a8a8a8;box-sizing:border-box;"></div>
<svg style="position:absolute;left:680px;top:409px" width="13" height="15" viewBox="0 0 13 15"><path d="M4.3 8.5 L6 12.3 L11 1.5" stroke="#ff0000" stroke-width="2.1" fill="none" stroke-linecap="round" stroke-linejoin="round"/></svg>
<div class="t" style="left:413px;top:407.50px;font-size:13px;color:#000;letter-spacing:0px;">Benutzernummer (Erstanlage)</div>
<div class="t" style="left:709px;top:407.50px;font-size:13px;color:#000;">15</div>
<div class="t" style="left:909px;top:407.50px;font-size:13px;color:#000;letter-spacing:0px;">Benutzernummer (Erstanlage)</div>
<div class="t" style="right:83px;top:407.50px;font-size:13px;color:#000;text-align:right">25</div>
<div style="left:1160px;top:407px;width:41px;height:22px;overflow:hidden">
<div class="t" style="right:-1px;top:0.50px;font-size:13px;color:#000;">151</div></div>
<div style="left:345px;top:430px;width:856px;height:23px;background:#fff;border-bottom:1px solid #eef0f7;box-sizing:border-box"></div>
<svg style="position:absolute;left:351px;top:433px" width="17" height="17" viewBox="0 0 17 17">
<rect x="0.6" y="0.6" width="14" height="14.4" rx="1.8" fill="#f2f2f2" stroke="#808080" stroke-width="0.9"/>
<path d="M14.9 2 L14.9 13.4 Q14.9 15.4 12.9 15.4 L2 15.4" stroke="#2a2a2a" stroke-width="1.3" fill="none"/>
<rect x="2.2" y="2.6" width="4" height="1.1" fill="#c4c4c4"/><rect x="7" y="2.6" width="3" height="1.1" fill="#cfd8dc"/>
<rect x="2.2" y="4.6" width="3" height="1.1" fill="#b9ccf6"/><rect x="6.3" y="4.6" width="6" height="1.1" fill="#f6a8a8"/>
<rect x="2.2" y="6.6" width="3" height="1.1" fill="#a9d8b0"/><rect x="6.3" y="6.6" width="6" height="1.1" fill="#d0d0d0"/>
<rect x="2.2" y="8.6" width="3" height="1.1" fill="#b9ccf6"/><rect x="6.3" y="8.6" width="6" height="1.1" fill="#f6b0b0"/>
<rect x="2.2" y="10.6" width="3" height="1.1" fill="#f0a8a8"/><rect x="6.3" y="10.6" width="6" height="1.1" fill="#f6b8b8"/>
<rect x="2.2" y="12.4" width="2.5" height="0.9" fill="#b0dcb0"/>
</svg>
<div style="left:384px;top:435px;width:11px;height:11px;border:1px solid #a8a8a8;box-sizing:border-box;"></div>
<div style="left:640px;top:435px;width:11px;height:11px;border:1px solid #a8a8a8;box-sizing:border-box;"></div>
<div style="left:680px;top:435px;width:11px;height:11px;border:1px solid #a8a8a8;box-sizing:border-box;"></div>
<svg style="position:absolute;left:680px;top:432px" width="13" height="15" viewBox="0 0 13 15"><path d="M4.3 8.5 L6 12.3 L11 1.5" stroke="#ff0000" stroke-width="2.1" fill="none" stroke-linecap="round" stroke-linejoin="round"/></svg>
<div class="t" style="left:413px;top:430.50px;font-size:13px;color:#000;letter-spacing:0px;">Zeilenformel ausführen</div>
<div class="t" style="left:709px;top:430.50px;font-size:13px;color:#000;">1&nbsp;&nbsp;beim Laden des Artikels</div>
<div class="t" style="left:909px;top:430.50px;font-size:13px;color:#000;letter-spacing:0px;">Zeilenformel ausführen</div>
<div style="left:345px;top:453px;width:856px;height:23px;background:#fff;border-bottom:1px solid #eef0f7;box-sizing:border-box"></div>
<svg style="position:absolute;left:351px;top:456px" width="17" height="17" viewBox="0 0 17 17">
<rect x="0.6" y="0.6" width="14" height="14.4" rx="1.8" fill="#f2f2f2" stroke="#808080" stroke-width="0.9"/>
<path d="M14.9 2 L14.9 13.4 Q14.9 15.4 12.9 15.4 L2 15.4" stroke="#2a2a2a" stroke-width="1.3" fill="none"/>
<rect x="2.2" y="2.6" width="4" height="1.1" fill="#c4c4c4"/><rect x="7" y="2.6" width="3" height="1.1" fill="#cfd8dc"/>
<rect x="2.2" y="4.6" width="3" height="1.1" fill="#b9ccf6"/><rect x="6.3" y="4.6" width="6" height="1.1" fill="#f6a8a8"/>
<rect x="2.2" y="6.6" width="3" height="1.1" fill="#a9d8b0"/><rect x="6.3" y="6.6" width="6" height="1.1" fill="#d0d0d0"/>
<rect x="2.2" y="8.6" width="3" height="1.1" fill="#b9ccf6"/><rect x="6.3" y="8.6" width="6" height="1.1" fill="#f6b0b0"/>
<rect x="2.2" y="10.6" width="3" height="1.1" fill="#f0a8a8"/><rect x="6.3" y="10.6" width="6" height="1.1" fill="#f6b8b8"/>
<rect x="2.2" y="12.4" width="2.5" height="0.9" fill="#b0dcb0"/>
</svg>
<div style="left:384px;top:458px;width:11px;height:11px;border:1px solid #a8a8a8;box-sizing:border-box;"></div>
<div style="left:640px;top:458px;width:11px;height:11px;border:1px solid #a8a8a8;box-sizing:border-box;"></div>
<svg style="position:absolute;left:640px;top:455px" width="13" height="15" viewBox="0 0 13 15"><path d="M4.3 8.5 L6 12.3 L11 1.5" stroke="#ff0000" stroke-width="2.1" fill="none" stroke-linecap="round" stroke-linejoin="round"/></svg>
<div style="left:680px;top:458px;width:11px;height:11px;border:1px solid #a8a8a8;box-sizing:border-box;"></div>
<div class="t" style="left:413px;top:453.50px;font-size:13px;color:#000;letter-spacing:-0.26px;">BenutzerNummerPacktisch</div>
<div class="t" style="left:909px;top:453.50px;font-size:13px;color:#000;letter-spacing:-0.26px;">BenutzerNummerPacktisch</div>
<div style="left:345px;top:476px;width:856px;height:23px;background:#fff;border-bottom:1px solid #eef0f7;box-sizing:border-box"></div>
<svg style="position:absolute;left:351px;top:479px" width="17" height="17" viewBox="0 0 17 17">
<rect x="0.6" y="0.6" width="14" height="14.4" rx="1.8" fill="#f2f2f2" stroke="#808080" stroke-width="0.9"/>
<path d="M14.9 2 L14.9 13.4 Q14.9 15.4 12.9 15.4 L2 15.4" stroke="#2a2a2a" stroke-width="1.3" fill="none"/>
<rect x="2.2" y="2.6" width="4" height="1.1" fill="#c4c4c4"/><rect x="7" y="2.6" width="3" height="1.1" fill="#cfd8dc"/>
<rect x="2.2" y="4.6" width="3" height="1.1" fill="#b9ccf6"/><rect x="6.3" y="4.6" width="6" height="1.1" fill="#f6a8a8"/>
<rect x="2.2" y="6.6" width="3" height="1.1" fill="#a9d8b0"/><rect x="6.3" y="6.6" width="6" height="1.1" fill="#d0d0d0"/>
<rect x="2.2" y="8.6" width="3" height="1.1" fill="#b9ccf6"/><rect x="6.3" y="8.6" width="6" height="1.1" fill="#f6b0b0"/>
<rect x="2.2" y="10.6" width="3" height="1.1" fill="#f0a8a8"/><rect x="6.3" y="10.6" width="6" height="1.1" fill="#f6b8b8"/>
<rect x="2.2" y="12.4" width="2.5" height="0.9" fill="#b0dcb0"/>
</svg>
<div style="left:384px;top:481px;width:11px;height:11px;border:1px solid #a8a8a8;box-sizing:border-box;"></div>
<div style="left:640px;top:481px;width:11px;height:11px;border:1px solid #a8a8a8;box-sizing:border-box;"></div>
<svg style="position:absolute;left:640px;top:478px" width="13" height="15" viewBox="0 0 13 15"><path d="M4.3 8.5 L6 12.3 L11 1.5" stroke="#ff0000" stroke-width="2.1" fill="none" stroke-linecap="round" stroke-linejoin="round"/></svg>
<div style="left:680px;top:481px;width:11px;height:11px;border:1px solid #a8a8a8;box-sizing:border-box;"></div>
<div class="t" style="left:413px;top:476.50px;font-size:13px;color:#000;letter-spacing:-0.23px;">ErstellDatumPacktisch</div>
<div class="t" style="left:909px;top:476.50px;font-size:13px;color:#000;letter-spacing:-0.23px;">ErstellDatumPacktisch</div>
<div style="left:345px;top:499px;width:856px;height:23px;background:#fff;border-bottom:1px solid #eef0f7;box-sizing:border-box"></div>
<svg style="position:absolute;left:351px;top:502px" width="17" height="17" viewBox="0 0 17 17">
<rect x="0.6" y="0.6" width="14" height="14.4" rx="1.8" fill="#f2f2f2" stroke="#808080" stroke-width="0.9"/>
<path d="M14.9 2 L14.9 13.4 Q14.9 15.4 12.9 15.4 L2 15.4" stroke="#2a2a2a" stroke-width="1.3" fill="none"/>
<rect x="2.2" y="2.6" width="4" height="1.1" fill="#c4c4c4"/><rect x="7" y="2.6" width="3" height="1.1" fill="#cfd8dc"/>
<rect x="2.2" y="4.6" width="3" height="1.1" fill="#b9ccf6"/><rect x="6.3" y="4.6" width="6" height="1.1" fill="#f6a8a8"/>
<rect x="2.2" y="6.6" width="3" height="1.1" fill="#a9d8b0"/><rect x="6.3" y="6.6" width="6" height="1.1" fill="#d0d0d0"/>
<rect x="2.2" y="8.6" width="3" height="1.1" fill="#b9ccf6"/><rect x="6.3" y="8.6" width="6" height="1.1" fill="#f6b0b0"/>
<rect x="2.2" y="10.6" width="3" height="1.1" fill="#f0a8a8"/><rect x="6.3" y="10.6" width="6" height="1.1" fill="#f6b8b8"/>
<rect x="2.2" y="12.4" width="2.5" height="0.9" fill="#b0dcb0"/>
</svg>
<div style="left:384px;top:504px;width:11px;height:11px;border:1px solid #a8a8a8;box-sizing:border-box;"></div>
<div style="left:640px;top:504px;width:11px;height:11px;border:1px solid #a8a8a8;box-sizing:border-box;"></div>
<svg style="position:absolute;left:640px;top:501px" width="13" height="15" viewBox="0 0 13 15"><path d="M4.3 8.5 L6 12.3 L11 1.5" stroke="#ff0000" stroke-width="2.1" fill="none" stroke-linecap="round" stroke-linejoin="round"/></svg>
<div style="left:680px;top:504px;width:11px;height:11px;border:1px solid #a8a8a8;box-sizing:border-box;"></div>
<div class="t" style="left:413px;top:499.50px;font-size:13px;color:#000;letter-spacing:-0.28px;">ComputerNamePacktisch</div>
<div class="t" style="left:909px;top:499.50px;font-size:13px;color:#000;letter-spacing:-0.28px;">ComputerNamePacktisch</div>
<div style="left:345px;top:522px;width:856px;height:23px;background:#fff;border-bottom:1px solid #eef0f7;box-sizing:border-box"></div>
<svg style="position:absolute;left:351px;top:525px" width="17" height="17" viewBox="0 0 17 17">
<rect x="0.6" y="0.6" width="14" height="14.4" rx="1.8" fill="#f2f2f2" stroke="#808080" stroke-width="0.9"/>
<path d="M14.9 2 L14.9 13.4 Q14.9 15.4 12.9 15.4 L2 15.4" stroke="#2a2a2a" stroke-width="1.3" fill="none"/>
<rect x="2.2" y="2.6" width="4" height="1.1" fill="#c4c4c4"/><rect x="7" y="2.6" width="3" height="1.1" fill="#cfd8dc"/>
<rect x="2.2" y="4.6" width="3" height="1.1" fill="#b9ccf6"/><rect x="6.3" y="4.6" width="6" height="1.1" fill="#f6a8a8"/>
<rect x="2.2" y="6.6" width="3" height="1.1" fill="#a9d8b0"/><rect x="6.3" y="6.6" width="6" height="1.1" fill="#d0d0d0"/>
<rect x="2.2" y="8.6" width="3" height="1.1" fill="#b9ccf6"/><rect x="6.3" y="8.6" width="6" height="1.1" fill="#f6b0b0"/>
<rect x="2.2" y="10.6" width="3" height="1.1" fill="#f0a8a8"/><rect x="6.3" y="10.6" width="6" height="1.1" fill="#f6b8b8"/>
<rect x="2.2" y="12.4" width="2.5" height="0.9" fill="#b0dcb0"/>
</svg>
<div style="left:384px;top:527px;width:11px;height:11px;border:1px solid #a8a8a8;box-sizing:border-box;"></div>
<div style="left:640px;top:527px;width:11px;height:11px;border:1px solid #a8a8a8;box-sizing:border-box;"></div>
<svg style="position:absolute;left:640px;top:524px" width="13" height="15" viewBox="0 0 13 15"><path d="M4.3 8.5 L6 12.3 L11 1.5" stroke="#ff0000" stroke-width="2.1" fill="none" stroke-linecap="round" stroke-linejoin="round"/></svg>
<div style="left:680px;top:527px;width:11px;height:11px;border:1px solid #a8a8a8;box-sizing:border-box;"></div>
<div class="t" style="left:413px;top:522.50px;font-size:13px;color:#000;letter-spacing:-0.18px;">VersionPacktisch</div>
<div class="t" style="left:909px;top:522.50px;font-size:13px;color:#000;letter-spacing:-0.18px;">VersionPacktisch</div>
<div style="left:345px;top:545px;width:856px;height:23px;background:#fff;border-bottom:1px solid #eef0f7;box-sizing:border-box"></div>
<svg style="position:absolute;left:350px;top:547px" width="17" height="17" viewBox="0 0 17 17">
<defs><linearGradient id="gf" x1="0" y1="0" x2="0" y2="1"><stop offset="0" stop-color="#dcf6d4"/><stop offset="0.45" stop-color="#b2ecaa"/><stop offset="0.62" stop-color="#3fd03f"/><stop offset="1" stop-color="#16a316"/></linearGradient></defs>
<path d="M6 2 Q6.2 0.9 7.3 0.9 L10 0.9 L11.6 2.2 L15 2.6 L15.6 10 L6 10 Z" fill="#fafafa" stroke="#6f6f6f" stroke-width="0.9"/>
<path d="M1.3 5.2 L4.6 5 L5.6 6.2 L14.6 6 L15.2 13.2 Q15 15.5 13 15.5 L3.6 15.8 Q1.9 15.8 1.8 14 Z" fill="url(#gf)" stroke="#3f8a3f" stroke-width="0.5"/>
<path d="M1 3.5 L1.2 10" stroke="#333" stroke-width="1"/>
<path d="M15.6 9 L15.2 14.6" stroke="#1f2f1f" stroke-width="1"/>
<path d="M3.2 16 L14 15.6" stroke="#2a3a2a" stroke-width="0.9"/>
</svg>
<div style="left:384px;top:550px;width:11px;height:11px;border:1px solid #a8a8a8;box-sizing:border-box;"></div>
<div style="left:640px;top:550px;width:11px;height:11px;border:1px solid #a8a8a8;box-sizing:border-box;"></div>
<svg style="position:absolute;left:640px;top:547px" width="13" height="15" viewBox="0 0 13 15"><path d="M4.3 8.5 L6 12.3 L11 1.5" stroke="#ff0000" stroke-width="2.1" fill="none" stroke-linecap="round" stroke-linejoin="round"/></svg>
<div style="left:680px;top:550px;width:11px;height:11px;border:1px solid #a8a8a8;box-sizing:border-box;"></div>
<div class="t" style="left:413px;top:545.08px;font-size:11.3px;color:#008000;font-weight:bold;letter-spacing:0.45px;">Artikelnummer</div>
<div class="t" style="left:909px;top:545.08px;font-size:11.3px;color:#008000;font-weight:bold;letter-spacing:0.45px;">Artikelnummer</div>
<div class="t" style="right:83px;top:545.08px;font-size:11.3px;color:#008000;font-weight:bold;text-align:right">26</div>
<div style="left:1160px;top:545px;width:41px;height:22px;overflow:hidden">
<div class="t" style="right:-1px;top:0.08px;font-size:11.3px;color:#008000;font-weight:bold;">3</div></div>
<div style="left:345px;top:568px;width:856px;height:23px;background:#fff;border-bottom:1px solid #eef0f7;box-sizing:border-box"></div>
<svg style="position:absolute;left:351px;top:571px" width="17" height="17" viewBox="0 0 17 17">
<rect x="0.6" y="0.6" width="14" height="14.4" rx="1.8" fill="#f2f2f2" stroke="#808080" stroke-width="0.9"/>
<path d="M14.9 2 L14.9 13.4 Q14.9 15.4 12.9 15.4 L2 15.4" stroke="#2a2a2a" stroke-width="1.3" fill="none"/>
<rect x="2.2" y="2.6" width="4" height="1.1" fill="#c4c4c4"/><rect x="7" y="2.6" width="3" height="1.1" fill="#cfd8dc"/>
<rect x="2.2" y="4.6" width="3" height="1.1" fill="#b9ccf6"/><rect x="6.3" y="4.6" width="6" height="1.1" fill="#f6a8a8"/>
<rect x="2.2" y="6.6" width="3" height="1.1" fill="#a9d8b0"/><rect x="6.3" y="6.6" width="6" height="1.1" fill="#d0d0d0"/>
<rect x="2.2" y="8.6" width="3" height="1.1" fill="#b9ccf6"/><rect x="6.3" y="8.6" width="6" height="1.1" fill="#f6b0b0"/>
<rect x="2.2" y="10.6" width="3" height="1.1" fill="#f0a8a8"/><rect x="6.3" y="10.6" width="6" height="1.1" fill="#f6b8b8"/>
<rect x="2.2" y="12.4" width="2.5" height="0.9" fill="#b0dcb0"/>
</svg>
<div style="left:384px;top:573px;width:11px;height:11px;border:1px solid #a8a8a8;box-sizing:border-box;"></div>
<div style="left:640px;top:573px;width:11px;height:11px;border:1px solid #a8a8a8;box-sizing:border-box;"></div>
<svg style="position:absolute;left:640px;top:570px" width="13" height="15" viewBox="0 0 13 15"><path d="M4.3 8.5 L6 12.3 L11 1.5" stroke="#ff0000" stroke-width="2.1" fill="none" stroke-linecap="round" stroke-linejoin="round"/></svg>
<div style="left:680px;top:573px;width:11px;height:11px;border:1px solid #a8a8a8;box-sizing:border-box;"></div>
<div class="t" style="left:413px;top:568.08px;font-size:11.3px;color:#008000;font-weight:bold;letter-spacing:0.29px;">Hauptartikelnummer</div>
<div class="t" style="left:909px;top:568.08px;font-size:11.3px;color:#008000;font-weight:bold;letter-spacing:0.29px;">Hauptartikelnummer</div>
<div style="left:345px;top:591px;width:856px;height:23px;background:#fff;border-bottom:1px solid #eef0f7;box-sizing:border-box"></div>
<svg style="position:absolute;left:351px;top:594px" width="17" height="17" viewBox="0 0 17 17">
<rect x="0.6" y="0.6" width="14" height="14.4" rx="1.8" fill="#f2f2f2" stroke="#808080" stroke-width="0.9"/>
<path d="M14.9 2 L14.9 13.4 Q14.9 15.4 12.9 15.4 L2 15.4" stroke="#2a2a2a" stroke-width="1.3" fill="none"/>
<rect x="2.2" y="2.6" width="4" height="1.1" fill="#c4c4c4"/><rect x="7" y="2.6" width="3" height="1.1" fill="#cfd8dc"/>
<rect x="2.2" y="4.6" width="3" height="1.1" fill="#b9ccf6"/><rect x="6.3" y="4.6" width="6" height="1.1" fill="#f6a8a8"/>
<rect x="2.2" y="6.6" width="3" height="1.1" fill="#a9d8b0"/><rect x="6.3" y="6.6" width="6" height="1.1" fill="#d0d0d0"/>
<rect x="2.2" y="8.6" width="3" height="1.1" fill="#b9ccf6"/><rect x="6.3" y="8.6" width="6" height="1.1" fill="#f6b0b0"/>
<rect x="2.2" y="10.6" width="3" height="1.1" fill="#f0a8a8"/><rect x="6.3" y="10.6" width="6" height="1.1" fill="#f6b8b8"/>
<rect x="2.2" y="12.4" width="2.5" height="0.9" fill="#b0dcb0"/>
</svg>
<div style="left:384px;top:596px;width:11px;height:11px;border:1px solid #a8a8a8;box-sizing:border-box;"></div>
<div style="left:640px;top:596px;width:11px;height:11px;border:1px solid #a8a8a8;box-sizing:border-box;"></div>
<svg style="position:absolute;left:640px;top:593px" width="13" height="15" viewBox="0 0 13 15"><path d="M4.3 8.5 L6 12.3 L11 1.5" stroke="#ff0000" stroke-width="2.1" fill="none" stroke-linecap="round" stroke-linejoin="round"/></svg>
<div style="left:680px;top:596px;width:11px;height:11px;border:1px solid #a8a8a8;box-sizing:border-box;"></div>
<div class="t" style="left:413px;top:591.08px;font-size:11.3px;color:#008000;font-weight:bold;letter-spacing:0.45px;">Zeilennummer</div>
<div class="t" style="left:909px;top:591.08px;font-size:11.3px;color:#008000;font-weight:bold;letter-spacing:0.38px;">Zeilennummer (intern)</div>
<div class="t" style="right:83px;top:591.08px;font-size:11.3px;color:#008000;font-weight:bold;text-align:right">26</div>
<div style="left:1160px;top:591px;width:41px;height:22px;overflow:hidden">
<div class="t" style="right:-1px;top:0.08px;font-size:11.3px;color:#008000;font-weight:bold;">78</div></div>
<div style="left:345px;top:614px;width:856px;height:23px;background:#fff;border-bottom:1px solid #eef0f7;box-sizing:border-box"></div>
<svg style="position:absolute;left:350px;top:616px" width="17" height="17" viewBox="0 0 17 17">
<defs><linearGradient id="gf" x1="0" y1="0" x2="0" y2="1"><stop offset="0" stop-color="#dcf6d4"/><stop offset="0.45" stop-color="#b2ecaa"/><stop offset="0.62" stop-color="#3fd03f"/><stop offset="1" stop-color="#16a316"/></linearGradient></defs>
<path d="M6 2 Q6.2 0.9 7.3 0.9 L10 0.9 L11.6 2.2 L15 2.6 L15.6 10 L6 10 Z" fill="#fafafa" stroke="#6f6f6f" stroke-width="0.9"/>
<path d="M1.3 5.2 L4.6 5 L5.6 6.2 L14.6 6 L15.2 13.2 Q15 15.5 13 15.5 L3.6 15.8 Q1.9 15.8 1.8 14 Z" fill="url(#gf)" stroke="#3f8a3f" stroke-width="0.5"/>
<path d="M1 3.5 L1.2 10" stroke="#333" stroke-width="1"/>
<path d="M15.6 9 L15.2 14.6" stroke="#1f2f1f" stroke-width="1"/>
<path d="M3.2 16 L14 15.6" stroke="#2a3a2a" stroke-width="0.9"/>
</svg>
<div style="left:384px;top:619px;width:11px;height:11px;border:1px solid #a8a8a8;box-sizing:border-box;"></div>
<div style="left:640px;top:619px;width:11px;height:11px;border:1px solid #a8a8a8;box-sizing:border-box;"></div>
<svg style="position:absolute;left:640px;top:616px" width="13" height="15" viewBox="0 0 13 15"><path d="M4.3 8.5 L6 12.3 L11 1.5" stroke="#ff0000" stroke-width="2.1" fill="none" stroke-linecap="round" stroke-linejoin="round"/></svg>
<div style="left:680px;top:619px;width:11px;height:11px;border:1px solid #a8a8a8;box-sizing:border-box;"></div>
<div class="t" style="left:413px;top:614.08px;font-size:11.3px;color:#008000;font-weight:bold;letter-spacing:0.11px;">Datentyp</div>
<div class="t" style="left:909px;top:614.08px;font-size:11.3px;color:#008000;font-weight:bold;letter-spacing:0.11px;">Datentyp</div>
<div class="t" style="right:83px;top:614.08px;font-size:11.3px;color:#008000;font-weight:bold;text-align:right">26</div>
<div style="left:1160px;top:614px;width:41px;height:22px;overflow:hidden">
<div class="t" style="right:-1px;top:0.08px;font-size:11.3px;color:#008000;font-weight:bold;">42</div></div>
<div style="left:345px;top:637px;width:856px;height:23px;background:#fff;border-bottom:1px solid #eef0f7;box-sizing:border-box"></div>
<svg style="position:absolute;left:350px;top:639px" width="17" height="17" viewBox="0 0 17 17">
<defs><linearGradient id="gf" x1="0" y1="0" x2="0" y2="1"><stop offset="0" stop-color="#dcf6d4"/><stop offset="0.45" stop-color="#b2ecaa"/><stop offset="0.62" stop-color="#3fd03f"/><stop offset="1" stop-color="#16a316"/></linearGradient></defs>
<path d="M6 2 Q6.2 0.9 7.3 0.9 L10 0.9 L11.6 2.2 L15 2.6 L15.6 10 L6 10 Z" fill="#fafafa" stroke="#6f6f6f" stroke-width="0.9"/>
<path d="M1.3 5.2 L4.6 5 L5.6 6.2 L14.6 6 L15.2 13.2 Q15 15.5 13 15.5 L3.6 15.8 Q1.9 15.8 1.8 14 Z" fill="url(#gf)" stroke="#3f8a3f" stroke-width="0.5"/>
<path d="M1 3.5 L1.2 10" stroke="#333" stroke-width="1"/>
<path d="M15.6 9 L15.2 14.6" stroke="#1f2f1f" stroke-width="1"/>
<path d="M3.2 16 L14 15.6" stroke="#2a3a2a" stroke-width="0.9"/>
</svg>
<div style="left:384px;top:642px;width:11px;height:11px;border:1px solid #a8a8a8;box-sizing:border-box;"></div>
<div style="left:640px;top:642px;width:11px;height:11px;border:1px solid #a8a8a8;box-sizing:border-box;"></div>
<svg style="position:absolute;left:640px;top:639px" width="13" height="15" viewBox="0 0 13 15"><path d="M4.3 8.5 L6 12.3 L11 1.5" stroke="#ff0000" stroke-width="2.1" fill="none" stroke-linecap="round" stroke-linejoin="round"/></svg>
<div style="left:680px;top:642px;width:11px;height:11px;border:1px solid #a8a8a8;box-sizing:border-box;"></div>
<div class="t" style="left:413px;top:637.08px;font-size:11.3px;color:#008000;font-weight:bold;letter-spacing:0.45px;">Mengegeliefert</div>
<div class="t" style="left:709px;top:637.50px;font-size:13px;color:#000;">0,00</div>
<div class="t" style="left:909px;top:637.08px;font-size:11.3px;color:#008000;font-weight:bold;letter-spacing:0.45px;">Menge geliefert</div>
<div class="t" style="right:83px;top:637.08px;font-size:11.3px;color:#008000;font-weight:bold;text-align:right">26</div>
<div style="left:1160px;top:637px;width:41px;height:22px;overflow:hidden">
<div class="t" style="right:-1px;top:0.08px;font-size:11.3px;color:#008000;font-weight:bold;">6</div></div>
<div style="left:345px;top:660px;width:856px;height:23px;background:#fff;border-bottom:1px solid #eef0f7;box-sizing:border-box"></div>
<svg style="position:absolute;left:351px;top:663px" width="17" height="17" viewBox="0 0 17 17">
<rect x="0.6" y="0.6" width="14" height="14.4" rx="1.8" fill="#f2f2f2" stroke="#808080" stroke-width="0.9"/>
<path d="M14.9 2 L14.9 13.4 Q14.9 15.4 12.9 15.4 L2 15.4" stroke="#2a2a2a" stroke-width="1.3" fill="none"/>
<rect x="2.2" y="2.6" width="4" height="1.1" fill="#c4c4c4"/><rect x="7" y="2.6" width="3" height="1.1" fill="#cfd8dc"/>
<rect x="2.2" y="4.6" width="3" height="1.1" fill="#b9ccf6"/><rect x="6.3" y="4.6" width="6" height="1.1" fill="#f6a8a8"/>
<rect x="2.2" y="6.6" width="3" height="1.1" fill="#a9d8b0"/><rect x="6.3" y="6.6" width="6" height="1.1" fill="#d0d0d0"/>
<rect x="2.2" y="8.6" width="3" height="1.1" fill="#b9ccf6"/><rect x="6.3" y="8.6" width="6" height="1.1" fill="#f6b0b0"/>
<rect x="2.2" y="10.6" width="3" height="1.1" fill="#f0a8a8"/><rect x="6.3" y="10.6" width="6" height="1.1" fill="#f6b8b8"/>
<rect x="2.2" y="12.4" width="2.5" height="0.9" fill="#b0dcb0"/>
</svg>
<div style="left:384px;top:665px;width:11px;height:11px;border:1px solid #a8a8a8;box-sizing:border-box;"></div>
<div style="left:640px;top:665px;width:11px;height:11px;border:1px solid #a8a8a8;box-sizing:border-box;"></div>
<svg style="position:absolute;left:640px;top:662px" width="13" height="15" viewBox="0 0 13 15"><path d="M4.3 8.5 L6 12.3 L11 1.5" stroke="#ff0000" stroke-width="2.1" fill="none" stroke-linecap="round" stroke-linejoin="round"/></svg>
<div style="left:680px;top:665px;width:11px;height:11px;border:1px solid #a8a8a8;box-sizing:border-box;"></div>
<div class="t" style="left:413px;top:660.08px;font-size:11.3px;color:#008000;font-weight:bold;letter-spacing:0.36px;">ChargeIdentnummer</div>
<div class="t" style="left:909px;top:660.08px;font-size:11.3px;color:#008000;font-weight:bold;letter-spacing:0.35px;">Charge-/Identnummer</div>
<div style="left:345px;top:683px;width:856px;height:23px;background:#fff;border-bottom:1px solid #eef0f7;box-sizing:border-box"></div>
<svg style="position:absolute;left:351px;top:686px" width="17" height="17" viewBox="0 0 17 17">
<rect x="0.6" y="0.6" width="14" height="14.4" rx="1.8" fill="#f2f2f2" stroke="#808080" stroke-width="0.9"/>
<path d="M14.9 2 L14.9 13.4 Q14.9 15.4 12.9 15.4 L2 15.4" stroke="#2a2a2a" stroke-width="1.3" fill="none"/>
<rect x="2.2" y="2.6" width="4" height="1.1" fill="#c4c4c4"/><rect x="7" y="2.6" width="3" height="1.1" fill="#cfd8dc"/>
<rect x="2.2" y="4.6" width="3" height="1.1" fill="#b9ccf6"/><rect x="6.3" y="4.6" width="6" height="1.1" fill="#f6a8a8"/>
<rect x="2.2" y="6.6" width="3" height="1.1" fill="#a9d8b0"/><rect x="6.3" y="6.6" width="6" height="1.1" fill="#d0d0d0"/>
<rect x="2.2" y="8.6" width="3" height="1.1" fill="#b9ccf6"/><rect x="6.3" y="8.6" width="6" height="1.1" fill="#f6b0b0"/>
<rect x="2.2" y="10.6" width="3" height="1.1" fill="#f0a8a8"/><rect x="6.3" y="10.6" width="6" height="1.1" fill="#f6b8b8"/>
<rect x="2.2" y="12.4" width="2.5" height="0.9" fill="#b0dcb0"/>
</svg>
<div style="left:384px;top:688px;width:11px;height:11px;border:1px solid #a8a8a8;box-sizing:border-box;"></div>
<div style="left:640px;top:688px;width:11px;height:11px;border:1px solid #a8a8a8;box-sizing:border-box;"></div>
<svg style="position:absolute;left:640px;top:685px" width="13" height="15" viewBox="0 0 13 15"><path d="M4.3 8.5 L6 12.3 L11 1.5" stroke="#ff0000" stroke-width="2.1" fill="none" stroke-linecap="round" stroke-linejoin="round"/></svg>
<div style="left:680px;top:688px;width:11px;height:11px;border:1px solid #a8a8a8;box-sizing:border-box;"></div>
<div class="t" style="left:413px;top:683.08px;font-size:11.3px;color:#008000;font-weight:bold;letter-spacing:0.45px;">Lagerort</div>
<div class="t" style="left:909px;top:683.08px;font-size:11.3px;color:#008000;font-weight:bold;letter-spacing:0.31px;">Lagerorte - Nummer</div>
<div style="left:345px;top:706px;width:856px;height:23px;background:#fff;border-bottom:1px solid #eef0f7;box-sizing:border-box"></div>
<svg style="position:absolute;left:351px;top:709px" width="17" height="17" viewBox="0 0 17 17">
<rect x="0.6" y="0.6" width="14" height="14.4" rx="1.8" fill="#f2f2f2" stroke="#808080" stroke-width="0.9"/>
<path d="M14.9 2 L14.9 13.4 Q14.9 15.4 12.9 15.4 L2 15.4" stroke="#2a2a2a" stroke-width="1.3" fill="none"/>
<rect x="2.2" y="2.6" width="4" height="1.1" fill="#c4c4c4"/><rect x="7" y="2.6" width="3" height="1.1" fill="#cfd8dc"/>
<rect x="2.2" y="4.6" width="3" height="1.1" fill="#b9ccf6"/><rect x="6.3" y="4.6" width="6" height="1.1" fill="#f6a8a8"/>
<rect x="2.2" y="6.6" width="3" height="1.1" fill="#a9d8b0"/><rect x="6.3" y="6.6" width="6" height="1.1" fill="#d0d0d0"/>
<rect x="2.2" y="8.6" width="3" height="1.1" fill="#b9ccf6"/><rect x="6.3" y="8.6" width="6" height="1.1" fill="#f6b0b0"/>
<rect x="2.2" y="10.6" width="3" height="1.1" fill="#f0a8a8"/><rect x="6.3" y="10.6" width="6" height="1.1" fill="#f6b8b8"/>
<rect x="2.2" y="12.4" width="2.5" height="0.9" fill="#b0dcb0"/>
</svg>
<div style="left:384px;top:711px;width:11px;height:11px;border:1px solid #a8a8a8;box-sizing:border-box;"></div>
<div style="left:640px;top:711px;width:11px;height:11px;border:1px solid #a8a8a8;box-sizing:border-box;"></div>
<svg style="position:absolute;left:640px;top:708px" width="13" height="15" viewBox="0 0 13 15"><path d="M4.3 8.5 L6 12.3 L11 1.5" stroke="#ff0000" stroke-width="2.1" fill="none" stroke-linecap="round" stroke-linejoin="round"/></svg>
<div style="left:680px;top:711px;width:11px;height:11px;border:1px solid #a8a8a8;box-sizing:border-box;"></div>
<div class="t" style="left:413px;top:706.08px;font-size:11.3px;color:#008000;font-weight:bold;letter-spacing:0.14px;">Einzelpreis</div>
<div class="t" style="left:709px;top:706.50px;font-size:13px;color:#000;">0,00</div>
<div class="t" style="left:909px;top:706.08px;font-size:11.3px;color:#008000;font-weight:bold;letter-spacing:0.14px;">Einzelpreis</div>
<div class="t" style="right:83px;top:706.08px;font-size:11.3px;color:#008000;font-weight:bold;text-align:right">26</div>
<div style="left:1160px;top:706px;width:41px;height:22px;overflow:hidden">
<div class="t" style="right:-1px;top:0.08px;font-size:11.3px;color:#008000;font-weight:bold;">7</div></div>
</body></html>
